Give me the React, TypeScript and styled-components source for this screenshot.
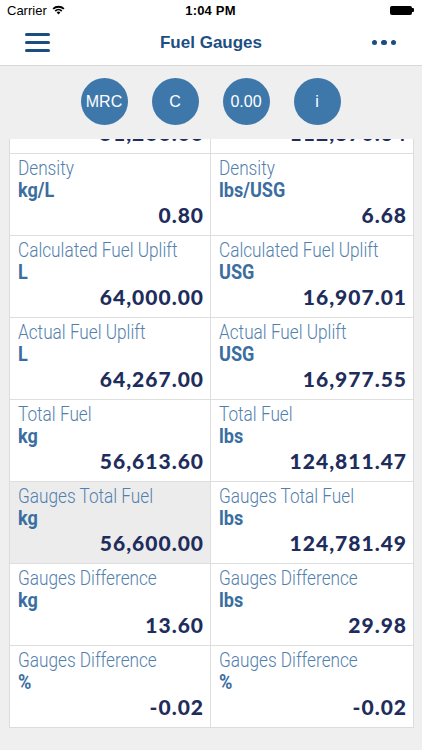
import React from 'react';
import styled, { createGlobalStyle } from 'styled-components';

const GlobalStyle = createGlobalStyle`
  html, body {
    margin: 0;
    padding: 0;
    background: #efefef;
  }
  * {
    box-sizing: border-box;
  }
`;

const Screen = styled.div`
  width: 422px;
  height: 750px;
  display: flex;
  flex-direction: column;
  background: #efefef;
  overflow: hidden;
`;

const StatusBar = styled.div`
  height: 20px;
  background: #fff;
  display: grid;
  grid-template-columns: 1fr auto 1fr;
  align-items: center;
  padding: 0 8px 0 7px;
  font-family: 'Liberation Sans', Arial, sans-serif;
  font-size: 13px;
  color: #000;
`;

const Carrier = styled.div`
  display: flex;
  align-items: center;
  gap: 5px;
`;

const Clock = styled.div`
  font-weight: 700;
  letter-spacing: 0.2px;
`;

const Battery = styled.div`
  justify-self: end;
  display: flex;
  align-items: center;
`;

const BatteryBody = styled.div`
  width: 22px;
  height: 9px;
  background: #000;
  border-radius: 2px;
`;

const BatteryNub = styled.div`
  width: 2px;
  height: 4px;
  background: #000;
  border-radius: 0 1px 1px 0;
`;

const NavBar = styled.div`
  height: 46px;
  background: #fff;
  border-bottom: 1px solid #d8d8d8;
  display: grid;
  grid-template-columns: 80px 1fr 80px;
  align-items: center;
`;

const MenuButton = styled.div`
  display: flex;
  flex-direction: column;
  gap: 5px;
  padding-left: 25px;
`;

const MenuBar = styled.span`
  display: block;
  width: 25px;
  height: 3px;
  border-radius: 2px;
  background: #1a4d80;
`;

const Title = styled.div`
  text-align: center;
  font-family: 'Liberation Sans', Arial, sans-serif;
  font-weight: 700;
  font-size: 17px;
  color: #1d4f82;
`;

const MoreButton = styled.div`
  justify-self: end;
  display: flex;
  gap: 4px;
  padding-right: 26px;
`;

const Dot = styled.span`
  width: 5.5px;
  height: 5.5px;
  border-radius: 50%;
  background: #1a4d80;
`;

const ActionBar = styled.div`
  height: 73px;
  display: flex;
  justify-content: center;
  align-items: center;
  gap: 24px;
  padding-bottom: 2px;
  padding-right: 1px;
  flex-shrink: 0;
`;

const Circle = styled.div`
  width: 47px;
  height: 47px;
  border-radius: 50%;
  background: #3e78ab;
  color: #fff;
  display: flex;
  align-items: center;
  justify-content: center;
  font-family: 'Liberation Sans', Arial, sans-serif;
  font-size: 16px;
`;

const Viewport = styled.div`
  flex: 1;
  overflow: hidden;
  padding: 0 8px 0 9px;
`;

const Panel = styled.div`
  margin-top: -69px;
  display: grid;
  grid-template-columns: 201px 1fr;
  background: #fff;
  border: 1px solid #dcdcdc;
`;

const Cell = styled.div<{ $shaded?: boolean; $left?: boolean }>`
  height: 82px;
  display: flex;
  flex-direction: column;
  align-items: flex-start;
  padding: 3px 6px 0 8px;
  background: ${({ $shaded }) => ($shaded ? '#ececec' : '#fff')};
  border-top: 1px solid #dedede;
  border-right: ${({ $left }) => ($left ? '1px solid #dedede' : 'none')};
  &:nth-child(-n + 2) {
    border-top: none;
  }
`;

const Label = styled.div`
  font-family: Roboto, 'Noto Sans', sans-serif;
  font-weight: 300;
  font-size: 20px;
  line-height: 22px;
  color: #5280ad;
  white-space: nowrap;
  transform: scaleX(0.86);
  transform-origin: left center;
`;

const Unit = styled.div`
  font-family: Roboto, 'Noto Sans', sans-serif;
  font-weight: 700;
  font-size: 21px;
  line-height: 22px;
  color: #3a6ea0;
  white-space: nowrap;
  transform: scaleX(0.86);
  transform-origin: left center;
`;

const Value = styled.div`
  align-self: stretch;
  margin-top: auto;
  margin-bottom: 7px;
  text-align: right;
  font-family: Lato, 'Open Sans', sans-serif;
  font-weight: 900;
  font-size: 21px;
  line-height: 26px;
  letter-spacing: 1px;
  color: #1e2d5c;
`;

interface Reading {
  label: string;
  unit: string;
  value: string;
  shaded?: boolean;
}

const rows: [Reading, Reading][] = [
  [
    { label: 'Total Fuel', unit: 'kg', value: '51,266.06' },
    { label: 'Total Fuel', unit: 'lbs', value: '112,870.34' },
  ],
  [
    { label: 'Density', unit: 'kg/L', value: '0.80' },
    { label: 'Density', unit: 'lbs/USG', value: '6.68' },
  ],
  [
    { label: 'Calculated Fuel Uplift', unit: 'L', value: '64,000.00' },
    { label: 'Calculated Fuel Uplift', unit: 'USG', value: '16,907.01' },
  ],
  [
    { label: 'Actual Fuel Uplift', unit: 'L', value: '64,267.00' },
    { label: 'Actual Fuel Uplift', unit: 'USG', value: '16,977.55' },
  ],
  [
    { label: 'Total Fuel', unit: 'kg', value: '56,613.60' },
    { label: 'Total Fuel', unit: 'lbs', value: '124,811.47' },
  ],
  [
    { label: 'Gauges Total Fuel', unit: 'kg', value: '56,600.00', shaded: true },
    { label: 'Gauges Total Fuel', unit: 'lbs', value: '124,781.49' },
  ],
  [
    { label: 'Gauges Difference', unit: 'kg', value: '13.60' },
    { label: 'Gauges Difference', unit: 'lbs', value: '29.98' },
  ],
  [
    { label: 'Gauges Difference', unit: '%', value: '-0.02' },
    { label: 'Gauges Difference', unit: '%', value: '-0.02' },
  ],
];

const WifiIcon: React.FC = () => (
  <svg width="13" height="10" viewBox="0 0 13 10">
    <path d="M0.5 3.3 A8.5 8.5 0 0 1 12.5 3.3 L11.2 4.6 A6.6 6.6 0 0 0 1.8 4.6 Z" fill="#000" />
    <path d="M2.6 5.4 A5.5 5.5 0 0 1 10.4 5.4 L9.1 6.7 A3.6 3.6 0 0 0 3.9 6.7 Z" fill="#000" />
    <path d="M4.7 7.5 A2.5 2.5 0 0 1 8.3 7.5 L6.5 9.4 Z" fill="#000" />
  </svg>
);

const App: React.FC = () => (
  <Screen>
    <GlobalStyle />
    <StatusBar>
      <Carrier>
        Carrier
        <WifiIcon />
      </Carrier>
      <Clock>1:04 PM</Clock>
      <Battery>
        <BatteryBody />
        <BatteryNub />
      </Battery>
    </StatusBar>
    <NavBar>
      <MenuButton>
        <MenuBar />
        <MenuBar />
        <MenuBar />
      </MenuButton>
      <Title>Fuel Gauges</Title>
      <MoreButton>
        <Dot />
        <Dot />
        <Dot />
      </MoreButton>
    </NavBar>
    <ActionBar>
      <Circle>MRC</Circle>
      <Circle>C</Circle>
      <Circle>0.00</Circle>
      <Circle>i</Circle>
    </ActionBar>
    <Viewport>
      <Panel>
        {rows.map((row, i) =>
          row.map((cell, j) => (
            <Cell key={`${i}-${j}`} $left={j === 0} $shaded={cell.shaded}>
              <Label>{cell.label}</Label>
              <Unit>{cell.unit}</Unit>
              <Value>{cell.value}</Value>
            </Cell>
          ))
        )}
      </Panel>
    </Viewport>
  </Screen>
);

export default App;
